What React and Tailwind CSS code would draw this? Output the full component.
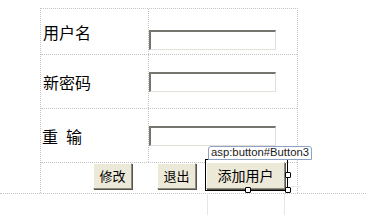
/**
 * App.jsx
 * Designer view of a small "change password / add user" form table.
 */
import React from 'react'

const FONT = { fontFamily: '"Noto Sans CJK SC", "Liberation Sans", sans-serif' }

const TextBox = () => (
  <div className="w-[127px] h-[20px] bg-white border-t-2 border-l-2 border-b border-r border-t-[#76766e] border-l-[#76766e] border-b-[#e2e0d8] border-r-[#e2e0d8]" />
)

const XpButton = ({ children, className = '' }) => (
  <button
    className={`flex items-center justify-center bg-[#ece9d8] text-black border border-t-white border-l-white border-b-[#8f8c80] border-r-[#8f8c80] shadow-[1px_1px_0_#55534c] ${className}`}
  >
    {children}
  </button>
)

const Handle = ({ className }) => (
  <span className={`absolute w-[6px] h-[6px] bg-white border border-black rounded-[1px] ${className}`} />
)

export default function App() {
  return (
    <div className="w-[366px] h-[215px] bg-white overflow-hidden pt-[8px]" style={FONT}>
      {/* Table */}
      <div className="ml-[40px] w-[258px] border-t border-l border-r border-dotted border-[#c4c4c4] text-black">
        {/* 用户名 */}
        <div className="flex h-[46px] border-b border-dotted border-[#c4c4c4]">
          <div className="w-[108px] flex items-center pl-[2px] text-[16px] border-r border-dotted border-[#c4c4c4]">
            用户名
          </div>
          <div className="flex-1 flex items-start pt-[21px]">
            <TextBox />
          </div>
        </div>

        {/* 新密码 */}
        <div className="flex h-[54px] border-b border-dotted border-[#c4c4c4]">
          <div className="w-[108px] flex items-center pl-[2px] text-[16px] border-r border-dotted border-[#c4c4c4]">
            新密码
          </div>
          <div className="flex-1 flex items-center">
            <TextBox />
          </div>
        </div>

        {/* 重 输 */}
        <div className="flex h-[54px] border-b border-dotted border-[#c4c4c4]">
          <div className="w-[108px] flex items-center pl-[1px] text-[16px] border-r border-dotted border-[#c4c4c4]">
            <span>重</span>
            <span className="ml-[8px]">输</span>
          </div>
          <div className="flex-1 flex items-center">
            <TextBox />
          </div>
        </div>

        {/* Buttons */}
        <div className="flex items-start h-[30px] pl-[52px] text-[13px]">
          <XpButton className="w-[39px] h-[26px]">修改</XpButton>
          <XpButton className="w-[39px] h-[26px] ml-[25px]">退出</XpButton>

          {/* Selected control */}
          <div className="relative ml-[10px] -mt-[1px]">
            <XpButton className="w-[79px] h-[27px] bg-[#d6d2c6] text-[14px] text-[#222]">添加用户</XpButton>

            {/* selection frame */}
            <span className="absolute left-[-1px] top-[-3px] w-[83px] h-[32px] border border-black pointer-events-none" />

            {/* tag */}
            <span
              className="absolute left-[2px] top-[-16px] h-[14px] px-[2px] flex items-center bg-white border border-[#8ba2c4] rounded-t-[3px] text-[11.3px] leading-none text-[#1a1a1a] whitespace-nowrap"
              style={{ fontFamily: '"Liberation Sans", sans-serif' }}
            >
              asp:button#Button3
            </span>

            {/* handles */}
            <Handle className="left-[39px] top-[25px]" />
            <Handle className="left-[79px] top-[25px]" />
            <Handle className="left-[79px] top-[10px]" />

            {/* snap guides */}
            <span className="absolute left-[1px] top-[31px] w-px h-[30px] bg-[#e6e6e6]" />
            <span className="absolute left-[78px] top-[31px] w-px h-[30px] bg-[#e6e6e6]" />
            <span className="absolute left-[85px] top-[24px] w-[10px] h-px bg-[#e6e6e6]" />
          </div>
        </div>
      </div>

      {/* page line */}
      <div className="w-full border-t border-dotted border-[#c4c4c4]" />
    </div>
  )
}
